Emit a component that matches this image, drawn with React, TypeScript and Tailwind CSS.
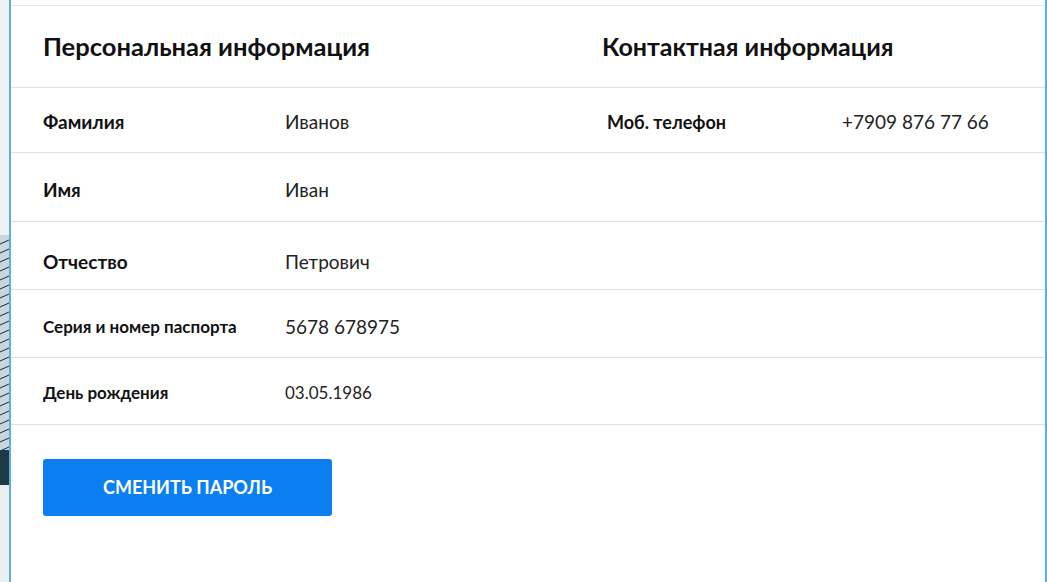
import React from "react"

const font = { fontFamily: "Lato, 'Noto Sans', sans-serif" }

const rows = [
  { label: "Фамилия", value: "Иванов", h: "h-[65px] pt-[4px]", lc: "text-[19px]", vc: "text-[19px]", right: { label: "Моб. телефон", value: "+7909 876 77 66" } },
  { label: "Имя", value: "Иван", h: "h-[69px] pt-[7px]", lc: "text-[19px]", vc: "text-[19px]" },
  { label: "Отчество", value: "Петрович", h: "h-[68px] pt-[13px]", lc: "text-[19px]", vc: "text-[19px]" },
  { label: "Серия и номер паспорта", value: "5678 678975", h: "h-[68px] pt-[7px]", lc: "text-[17px]", vc: "text-[19px]" },
  { label: "День рождения", value: "03.05.1986", h: "h-[67px] pt-[4px]", lc: "text-[17px] pl-[31px]", vc: "text-[17px]" },
]

function BackdropStrip() {
  // a sliver of the building photo behind the card
  const lines = []
  for (let y = 240; y < 455; y += 9) {
    lines.push(<line key={y} x1="0" y1={y + 4} x2="9" y2={y} stroke="#1d2a33" strokeWidth="1" />)
  }
  return (
    <svg width="9" height="582" className="block shrink-0">
      <rect width="9" height="582" fill="#eef2f5" />
      <rect y="235" width="9" height="220" fill="#c9d6de" />
      {lines}
      <rect y="450" width="9" height="35" fill="#1e3a44" />
      <rect y="485" width="9" height="97" fill="#e9eef1" />
    </svg>
  )
}

export default function App() {
  return (
    <div className="flex w-[1047px] h-[582px] overflow-hidden bg-white" style={font}>
      <BackdropStrip />
      <div className="flex-1 border-l-2 border-r-2 border-[#5aaeea] bg-white">
        <div className="mt-[5px] border-t border-[#e6e6e6]" />
        <div className="flex h-[82px] items-center border-b border-[#e0e0e0]">
          <h2 className="w-[591px] shrink-0 pl-[32px] text-[25.5px] font-bold text-[#111]">Персональная информация</h2>
          <h2 className="text-[25px] font-bold text-[#111]">Контактная информация</h2>
        </div>
        {rows.map((r) => (
          <div key={r.label} className={`flex items-center border-b border-[#e0e0e0] ${r.h}`}>
            <div className={`w-[274px] shrink-0 pl-[32px] font-bold text-[#111] ${r.lc}`}>
              {r.label}
            </div>
            <div className={`w-[322px] shrink-0 text-[#222] ${r.vc}`}>{r.value}</div>
            {r.right && (
              <>
                <div className="w-[235px] shrink-0 text-[18px] font-bold text-[#111]">{r.right.label}</div>
                <div className="text-[19px] text-[#222]">{r.right.value}</div>
              </>
            )}
          </div>
        ))}
        <div className="pl-[32px] pt-[34px]">
          <button className="w-[289px] h-[57px] rounded-[3px] bg-[#0a80f0] text-[18px] font-bold text-white">
            СМЕНИТЬ ПАРОЛЬ
          </button>
        </div>
      </div>
    </div>
  )
}
